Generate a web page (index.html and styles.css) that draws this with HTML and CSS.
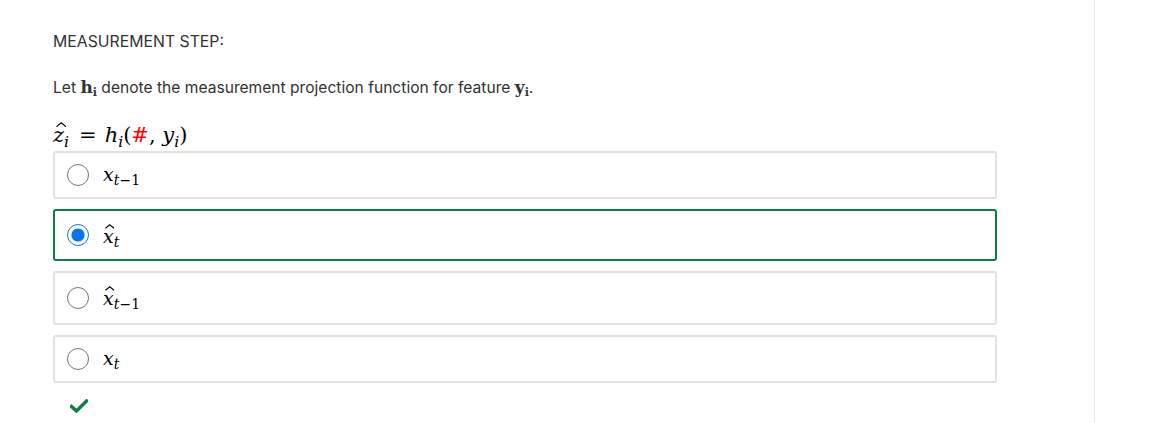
FILE: index.html
```html
<!DOCTYPE html>
<html>
<head>
<meta charset="utf-8">
<link rel="stylesheet" href="styles.css">
</head>
<body>
<div class="page">
  <main class="main">
    <p class="step">MEASUREMENT STEP:</p>
    <p class="prompt">Let <b class="mb">h<sub>i</sub></b> denote the measurement projection function for feature <b class="mb">y<sub>i</sub></b>.</p>
    <div class="formula"><span class="m"><span class="hat">z<svg class="acc" viewBox="0 0 10 5"><path d="M0.5 4.5 L5 0.8 L9.5 4.5" fill="none" stroke="#000" stroke-width="1.1"/></svg></span><sub>i</sub></span><span class="op">=</span><span class="m">h<sub>i</sub></span><span class="up">(</span><span class="red">#</span><span class="up">, </span><span class="m">y<sub>i</sub></span><span class="up">)</span></div>
    <div class="options">
      <label class="opt"><input type="radio" name="q"><span class="m lg">x<sub>t<span class="up">−1</span></sub></span></label>
      <label class="opt sel"><input type="radio" name="q" checked><span class="m lg"><span class="hat">x<svg class="acc" viewBox="0 0 10 5"><path d="M0.5 4.5 L5 0.8 L9.5 4.5" fill="none" stroke="#000" stroke-width="1.1"/></svg></span><sub>t</sub></span></label>
      <label class="opt"><input type="radio" name="q"><span class="m lg deep"><span class="hat">x<svg class="acc" viewBox="0 0 10 5"><path d="M0.5 4.5 L5 0.8 L9.5 4.5" fill="none" stroke="#000" stroke-width="1.1"/></svg></span><sub>t<span class="up">−1</span></sub></span></label>
      <label class="opt"><input type="radio" name="q"><span class="m lg">x<sub>t</sub></span></label>
    </div>
    <div class="check">
      <svg width="18" height="14" viewBox="0 0 18 14"><path d="M1.5 7.5 L6.5 12 L16.5 2" fill="none" stroke="#137a4a" stroke-width="3.4" stroke-linecap="square"/></svg>
    </div>
  </main>
  <aside class="side"></aside>
</div>
</body>
</html>
```

FILE: styles.css
```css
html, body {
  margin: 0;
  padding: 0;
  background: #fff;
}
body {
  font-family: Inter, "Noto Sans", Arial, sans-serif;
  color: #333;
}
.page {
  display: flex;
  height: 423px;
}
.main {
  width: 1041px;
  padding-left: 53px;
  border-right: 1px solid #e6e6e6;
  box-sizing: content-box;
}
.side {
  flex: 1;
}
.step {
  margin: 32px 0 0;
  font-size: 15.8px;
  line-height: 19px;
}
.prompt {
  margin: 26px 0 0;
  font-size: 15.6px;
  line-height: 20px;
}
.mb {
  font-family: "DejaVu Serif", serif;
  font-weight: bold;
  font-size: 17px;
}
.mb sub {
  font-size: 11px;
  vertical-align: -3px;
  line-height: 0;
}
.formula {
  margin-top: 21px;
  font-family: "DejaVu Serif", serif;
  font-size: 21px;
  line-height: 30px;
  color: #000;
  height: 32px;
}
.m {
  font-style: italic;
}
.m sub {
  font-size: 0.74em;
  vertical-align: -0.3em;
  line-height: 0;
}
.up {
  font-style: normal;
}
.op {
  margin: 0 8px 0 10px;
  font-style: normal;
}
.red {
  color: #ff0000;
  font-style: normal;
  font-family: "DejaVu Serif", serif;
}
.hat {
  position: relative;
  display: inline-block;
  line-height: 1;
  padding-top: 6px;
}
.hat .acc {
  position: absolute;
  left: 0.12em;
  top: 3px;
  width: 0.5em;
  height: 0.25em;
}
.options {
  width: 944px;
  display: flex;
  flex-direction: column;
  gap: 10px;
}
.opt {
  display: flex;
  align-items: center;
  gap: 14px;
  border: 2px solid #e1e1e1;
  border-radius: 3px;
  padding: 10px 12px;
  min-height: 22px;
}
.opt.sel {
  border-color: #137a4a;
}
.opt input {
  width: 22px;
  height: 22px;
  margin: 0;
  flex: none;
  accent-color: #0b75f0;
}
.lg {
  font-family: "DejaVu Serif", serif;
  font-size: 19px;
  line-height: 22px;
  color: #000;
  display: inline-block;
  padding-bottom: 2px;
}
.lg.deep {
  padding-bottom: 4px;
}
.check {
  margin: 16px 0 0 17px;
  height: 14px;
}
.check svg {
  display: block;
}
```
